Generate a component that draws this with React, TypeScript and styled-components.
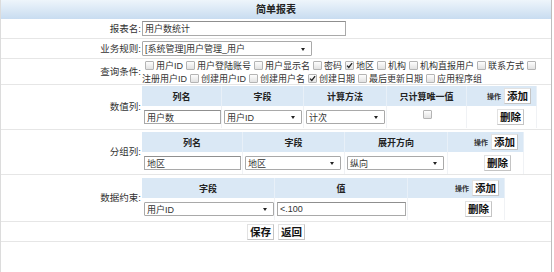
import styled, { createGlobalStyle } from 'styled-components';

const GlobalStyle = createGlobalStyle`
  html, body {
    margin: 0;
    padding: 0;
    background: #fff;
  }
  body {
    font-family: "Liberation Sans", "Noto Sans CJK SC", sans-serif;
    color: #333;
  }
`;

const Page = styled.div`
  width: 550px;
  min-height: 272px;
  border-left: 1px solid #dcdcdc;
  border-right: 1px solid #bdbdbd;
`;

const Title = styled.div`
  height: 19px;
  line-height: 19px;
  text-align: center;
  font-size: 10px;
  font-weight: bold;
  color: #222;
  background: linear-gradient(#eef5fb, #c8dcf0);
`;

const Row = styled.div<{ $h: number }>`
  display: grid;
  grid-template-columns: 141px 1fr;
  height: ${(p) => p.$h}px;
  box-sizing: border-box;
  border-bottom: 1px solid #e6e6e6;
`;

const Label = styled.div`
  align-self: center;
  text-align: right;
  padding-right: 1px;
  font-size: 9.5px;
  line-height: 12px;
  color: #333;
  white-space: nowrap;
`;

const Field = styled.div<{ $pt?: number; $center?: boolean }>`
  display: flex;
  flex-direction: column;
  justify-content: ${(p) => (p.$center ? 'center' : 'flex-start')};
  padding-top: ${(p) => p.$pt ?? 0}px;
  min-width: 0;
`;

const ActionRow = styled.div`
  grid-column: 1 / -1;
  display: flex;
  justify-content: center;
  align-items: center;
  gap: 4px;
`;

const CheckLine = styled.div`
  display: flex;
  align-items: center;
  height: 13px;
  white-space: nowrap;
  font-size: 9px;
  color: #333;
`;

const Box = styled.span`
  display: inline-flex;
  align-items: center;
  justify-content: center;
  flex: none;
  width: 9px;
  height: 9px;
  box-sizing: border-box;
  border: 1px solid #b4b4b4;
  border-radius: 1px;
  background: linear-gradient(#fdfdfd, #e2e2e2);
  margin: 0 2px 0 3px;
`;

const TextInput = styled.input<{ $w: number; $h?: number }>`
  width: ${(p) => p.$w}px;
  height: ${(p) => p.$h ?? 14}px;
  box-sizing: border-box;
  border: 1px solid #a9a9a9;
  border-top-color: #8f8f8f;
  padding: 0 2px;
  margin: 0;
  font-family: inherit;
  font-size: 9px;
  color: #333;
  background: #fff;
  outline: none;
`;

const SelectBox = styled.div<{ $w: number; $h?: number }>`
  position: relative;
  display: flex;
  align-items: center;
  width: ${(p) => p.$w}px;
  height: ${(p) => p.$h ?? 14}px;
  box-sizing: border-box;
  border: 1px solid #a9a9a9;
  border-radius: 1px;
  padding-left: 2px;
  font-size: 9px;
  color: #333;
  background: #fff;
  white-space: nowrap;

  &::after {
    content: '';
    position: absolute;
    right: 6px;
    top: 50%;
    margin-top: -1px;
    border-left: 2px solid transparent;
    border-right: 2px solid transparent;
    border-top: 3px solid #222;
  }
`;

const Grid = styled.div<{ $cols: string }>`
  display: grid;
  grid-template-columns: ${(p) => p.$cols};
  width: max-content;
`;

const Th = styled.div<{ $op?: boolean }>`
  height: 20px;
  box-sizing: border-box;
  display: flex;
  align-items: center;
  justify-content: ${(p) => (p.$op ? 'flex-end' : 'center')};
  padding-right: ${(p) => (p.$op ? 5 : 0)}px;
  background: #dae8f5;
  border-right: 1px solid #e8f0f8;
  font-size: 9px;
  font-weight: bold;
  color: #222;
  white-space: nowrap;
`;

const Td = styled.div<{ $op?: boolean; $center?: boolean }>`
  height: 22px;
  box-sizing: border-box;
  display: flex;
  align-items: ${(p) => (p.$center ? 'flex-start' : 'center')};
  justify-content: ${(p) => (p.$op ? 'flex-end' : p.$center ? 'center' : 'flex-start')};
  padding-left: ${(p) => (p.$op || p.$center ? 0 : 2)}px;
  padding-right: ${(p) => (p.$op ? 12 : 0)}px;
  padding-top: ${(p) => (p.$center ? 4 : 0)}px;
  border-right: 1px solid #f0f2f5;
`;

const OpText = styled.span`
  font-size: 7px;
  font-weight: bold;
  color: #333;
  margin-right: 3px;
`;

const Button = styled.button`
  height: 16px;
  padding: 0 2px;
  margin: 0;
  box-sizing: border-box;
  font-family: inherit;
  font-size: 10.5px;
  font-weight: bold;
  line-height: 14px;
  color: #111;
  background: #fff;
  border: 1px solid #e2e2e2;
  border-right-color: #c4c4c4;
  border-bottom-color: #c4c4c4;
  cursor: pointer;
`;

type Token = { box?: boolean; on?: boolean; text?: string };

const lineOne: Token[] = [
  { box: true, text: '用户ID' },
  { box: true, text: '用户登陆账号' },
  { box: true, text: '用户显示名' },
  { box: true, text: '密码' },
  { box: true, on: true, text: '地区' },
  { box: true, text: '机构' },
  { box: true, text: '机构直报用户' },
  { box: true, text: '联系方式' },
  { box: true },
];

const lineTwo: Token[] = [
  { text: '注册用户ID' },
  { box: true, text: '创建用户ID' },
  { box: true, text: '创建用户名' },
  { box: true, on: true, text: '创建日期' },
  { box: true, text: '最后更新日期' },
  { box: true, text: '应用程序组' },
];

function Check({ on }: { on?: boolean }) {
  return (
    <Box>
      {on && (
        <svg width="7" height="7" viewBox="0 0 7 7">
          <path d="M1 3.6 L2.8 5.4 L6.1 1.2" stroke="#222" strokeWidth="1.3" fill="none" />
        </svg>
      )}
    </Box>
  );
}

function CheckRow({ tokens }: { tokens: Token[] }) {
  return (
    <CheckLine>
      {tokens.map((t, i) => (
        <span key={i} style={{ display: 'contents' }}>
          {t.box && <Check on={t.on} />}
          {t.text && <span>{t.text}</span>}
        </span>
      ))}
    </CheckLine>
  );
}

function OpHeader() {
  return (
    <Th $op>
      <OpText>操作</OpText>
      <Button>添加</Button>
    </Th>
  );
}

function DeleteCell() {
  return (
    <Td $op>
      <Button>删除</Button>
    </Td>
  );
}

export default function App() {
  return (
    <>
      <GlobalStyle />
      <Page>
        <Title>简单报表</Title>

        <Row $h={20}>
          <Label>报表名:</Label>
          <Field $center>
            <TextInput $w={204} $h={15} defaultValue="用户数统计" />
          </Field>
        </Row>

        <Row $h={20}>
          <Label>业务规则:</Label>
          <Field $center>
            <SelectBox $w={170} $h={15}>[系统管理]用户管理_用户</SelectBox>
          </Field>
        </Row>

        <Row $h={26}>
          <Label>查询条件:</Label>
          <Field $pt={0}>
            <CheckRow tokens={lineOne} />
            <CheckRow tokens={lineTwo} />
          </Field>
        </Row>

        <Row $h={45}>
          <Label>数值列:</Label>
          <Field $pt={1}>
            <Grid $cols="80px 82px 83px 80px 70px">
              <Th>列名</Th>
              <Th>字段</Th>
              <Th>计算方法</Th>
              <Th>只计算唯一值</Th>
              <OpHeader />
              <Td>
                <TextInput $w={77} defaultValue="用户数" />
              </Td>
              <Td>
                <SelectBox $w={78}>用户ID</SelectBox>
              </Td>
              <Td>
                <SelectBox $w={79}>计次</SelectBox>
              </Td>
              <Td $center>
                <Check />
              </Td>
              <DeleteCell />
            </Grid>
          </Field>
        </Row>

        <Row $h={45}>
          <Label>分组列:</Label>
          <Field $pt={2}>
            <Grid $cols="101px 102px 103px 76px">
              <Th>列名</Th>
              <Th>字段</Th>
              <Th>展开方向</Th>
              <OpHeader />
              <Td>
                <TextInput $w={97} defaultValue="地区" />
              </Td>
              <Td>
                <SelectBox $w={96}>地区</SelectBox>
              </Td>
              <Td>
                <SelectBox $w={97}>纵向</SelectBox>
              </Td>
              <DeleteCell />
            </Grid>
          </Field>
        </Row>

        <Row $h={47}>
          <Label>数据约束:</Label>
          <Field $pt={3}>
            <Grid $cols="133px 133px 97px">
              <Th>字段</Th>
              <Th>值</Th>
              <OpHeader />
              <Td>
                <SelectBox $w={130}>用户ID</SelectBox>
              </Td>
              <Td>
                <TextInput $w={129} defaultValue="<.100" />
              </Td>
              <DeleteCell />
            </Grid>
          </Field>
        </Row>

        <Row $h={20}>
          <ActionRow>
            <Button>保存</Button>
            <Button>返回</Button>
          </ActionRow>
        </Row>
      </Page>
    </>
  );
}
